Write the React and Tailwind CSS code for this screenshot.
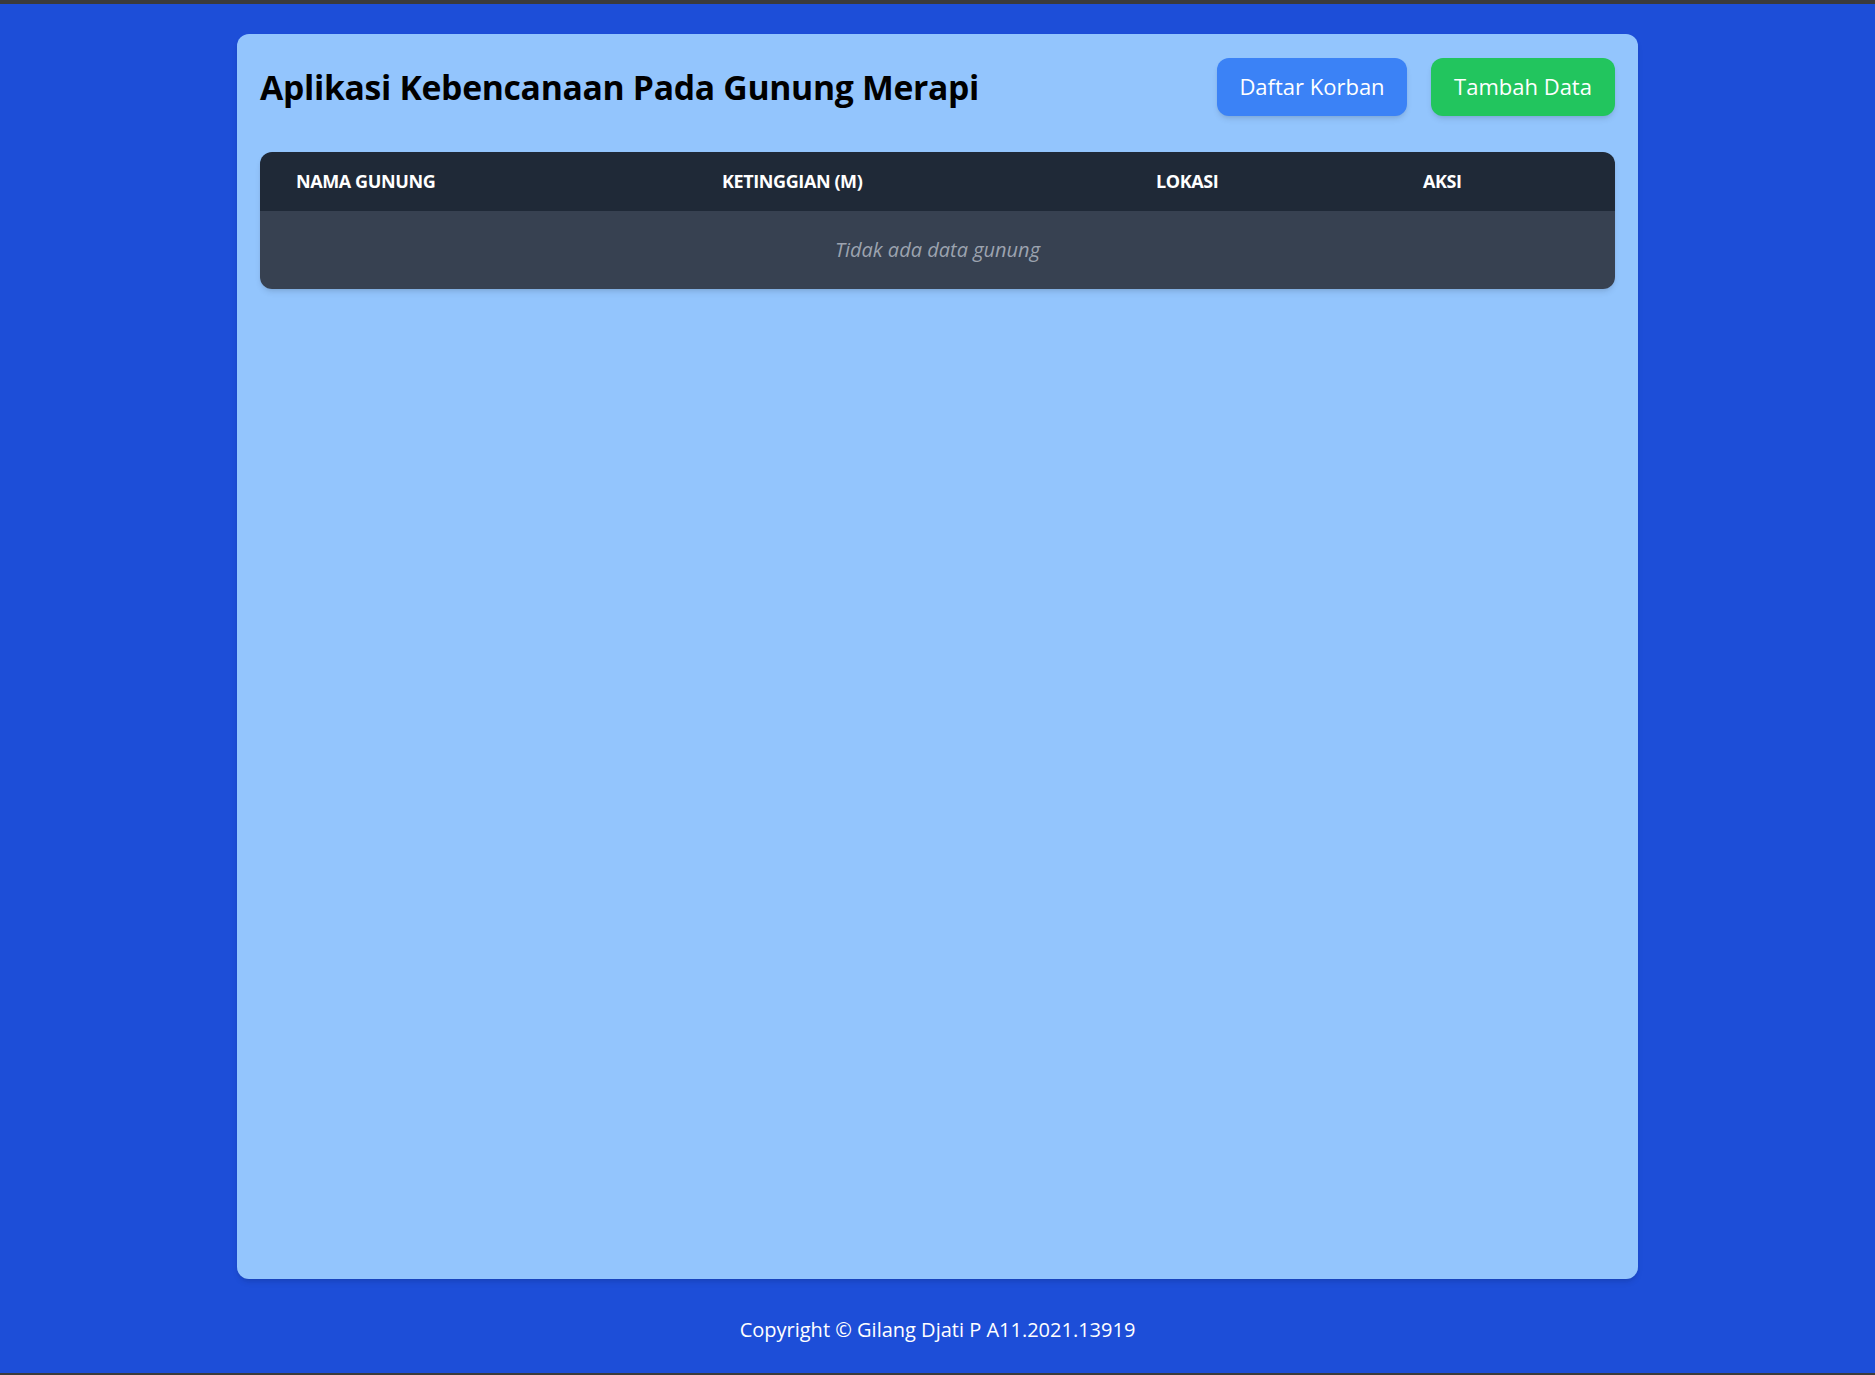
import React from "react";

export default function App() {
  const font = { fontFamily: '"Open Sans", "Noto Sans", sans-serif' };
  return (
    <div className="w-full min-h-[1375px] flex flex-col bg-[#1d4ed8]" style={font}>
      <div className="h-[4px] bg-[#3b3b3b]" />
      <div className="flex-1 flex flex-col pt-[30px]">
        <div className="w-[1401px] h-[1245px] mx-auto bg-[#93c5fd] rounded-[12px] shadow-md p-[23px] pt-[23px]">
          <div className="flex items-center justify-between h-[59px]">
            <h1 className="text-[33.7px] font-bold text-black leading-none tracking-[-0.3px] pt-[2px]">
              Aplikasi Kebencanaan Pada Gunung Merapi
            </h1>
            <div className="flex gap-[24px]">
              <button className="h-[58px] w-[190px] rounded-[12px] bg-[#3b82f6] text-white text-[22px] shadow-md">
                Daftar Korban
              </button>
              <button className="h-[58px] w-[184px] rounded-[12px] bg-[#22c55e] text-white text-[22px] shadow-md">
                Tambah Data
              </button>
            </div>
          </div>
          <div className="mt-[36px] rounded-[12px] overflow-hidden shadow-md">
            <table className="w-full table-fixed border-collapse">
              <colgroup>
                <col className="w-[426px]" />
                <col className="w-[434px]" />
                <col className="w-[267px]" />
                <col />
              </colgroup>
              <thead>
                <tr className="bg-[#1f2937] h-[59px] text-left text-white text-[18px] font-bold uppercase tracking-[-0.4px]">
                  <th className="px-[36px] font-bold">Nama Gunung</th>
                  <th className="px-[36px] font-bold">Ketinggian (m)</th>
                  <th className="px-[36px] font-bold">Lokasi</th>
                  <th className="px-[36px] font-bold">Aksi</th>
                </tr>
              </thead>
              <tbody>
                <tr className="bg-[#374151] h-[78px]">
                  <td colSpan={4} className="text-center italic text-[#9ca3af] text-[20px]">
                    Tidak ada data gunung
                  </td>
                </tr>
              </tbody>
            </table>
          </div>
        </div>
        <footer className="flex-1 flex items-center justify-center pt-[8px] text-white text-[20px]">
          Copyright © Gilang Djati P A11.2021.13919
        </footer>
      </div>
      <div className="h-[2px] bg-[#3b3b3b]" />
    </div>
  );
}
